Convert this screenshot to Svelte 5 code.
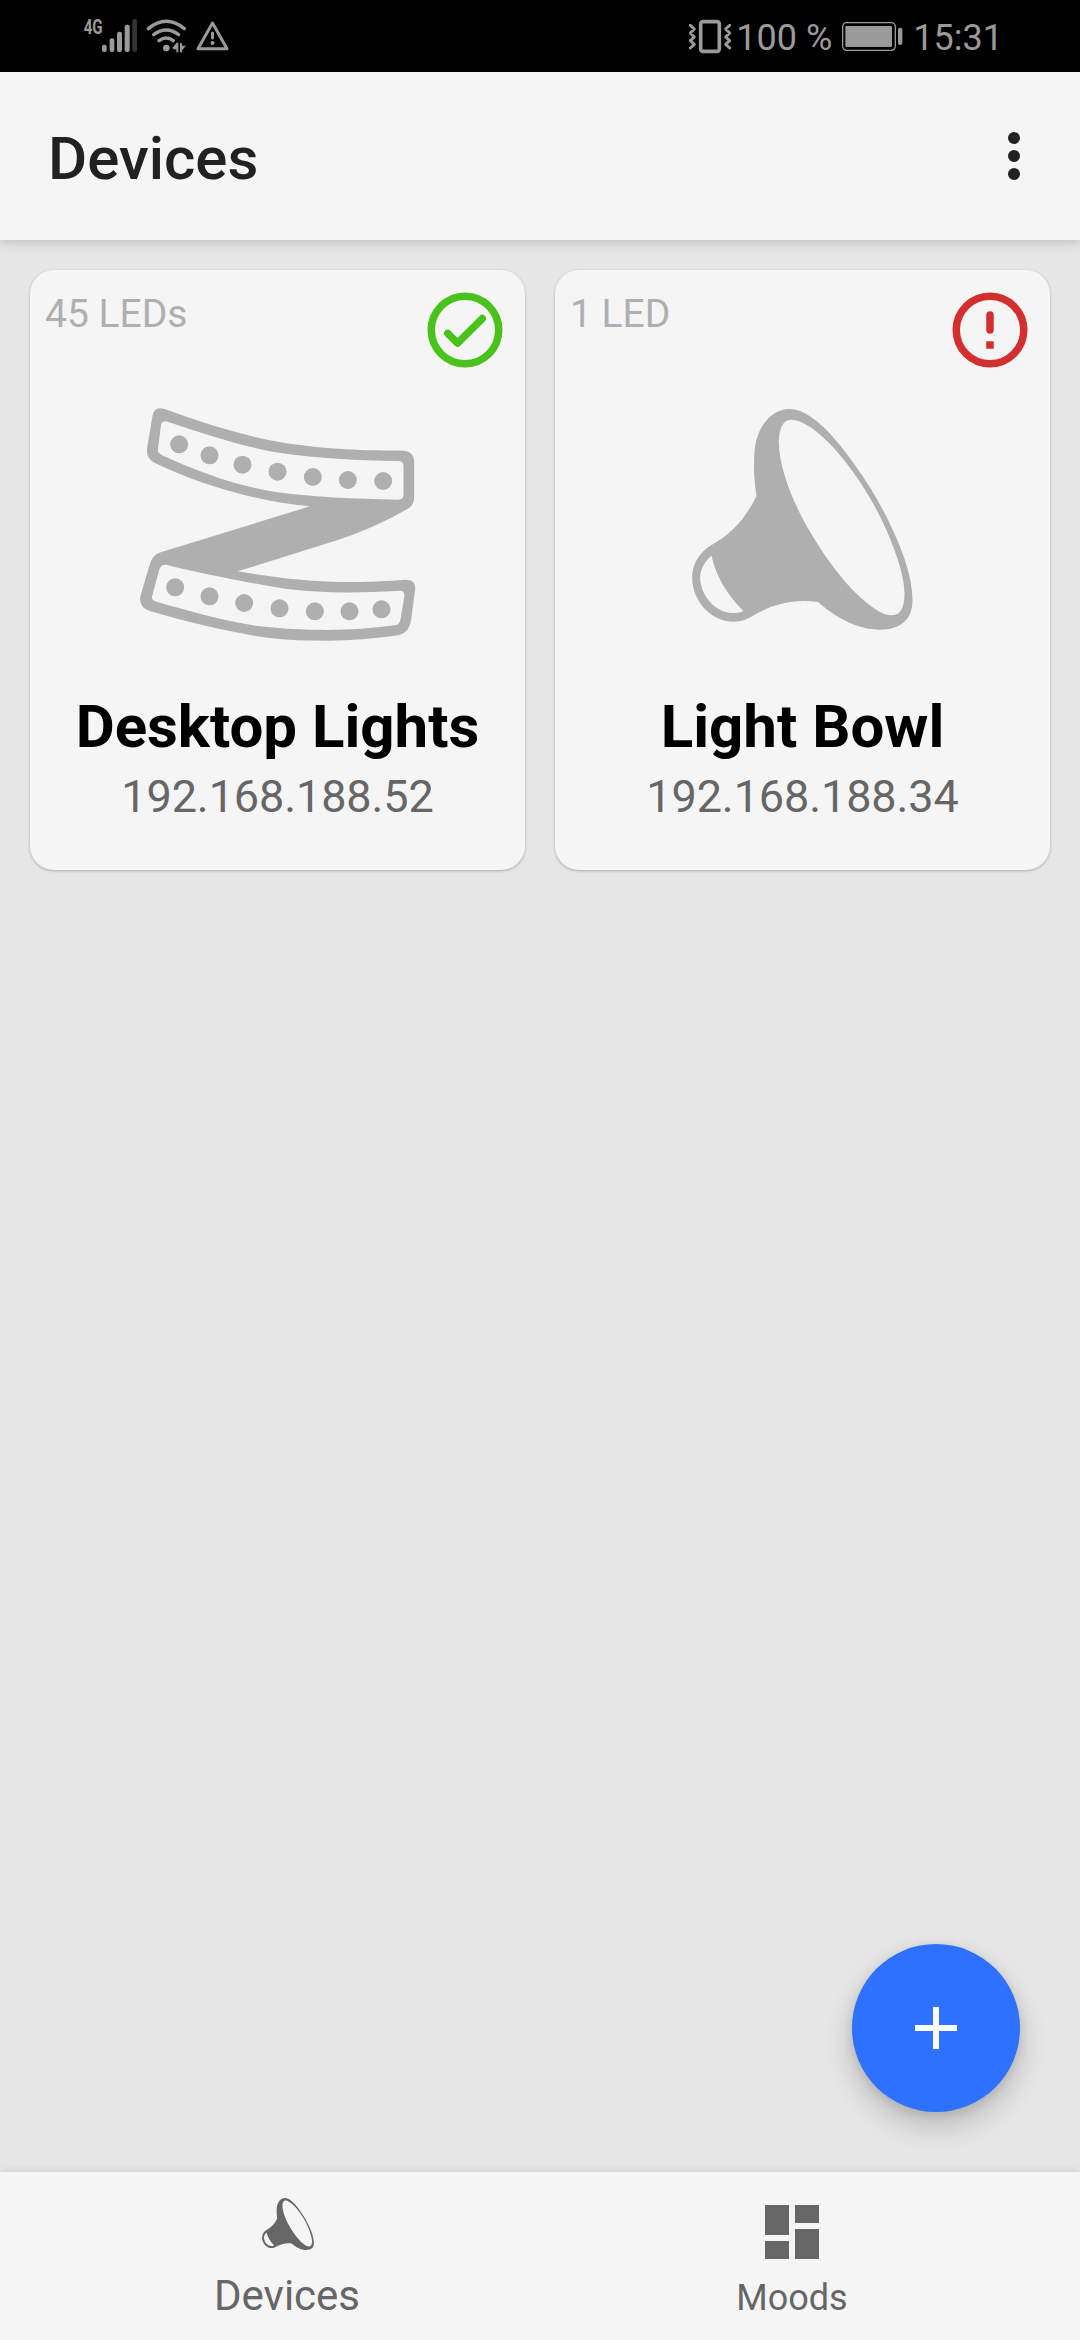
<script>
  const devices = [
    { leds: '45 LEDs', name: 'Desktop Lights', ip: '192.168.188.52', icon: 'strip', online: true },
    { leds: '1 LED', name: 'Light Bowl', ip: '192.168.188.34', icon: 'bowl', online: false }
  ];

  const upperDots = [[176, 193], [267, 226], [366, 254], [471, 275], [577, 291], [682, 300], [788, 303]];
  const lowerDots = [[164, 622], [267, 649], [371, 669], [477, 685], [583, 694], [687, 694], [783, 688]];
</script>

{#snippet bowl()}
  <path
    fill-rule="evenodd"
    d="M258 348C249 290 249 250 253 205C262 135 305 87 357 87C440 87 540 230 602 328C660 425 726 560 726 660C726 720 690 749 628 749C560 749 495 712 442 666C365 655 300 676 250 706C225 721 210 725 189 725C120 725 65 660 65 593C65 550 90 515 122 496C185 460 225 415 258 348Z
    M363 119C335 119 325 150 325 190C327 270 370 380 435 482C510 605 610 706 664 706C692 706 702 680 702 640C702 570 650 440 595 348C520 220 420 119 363 119Z
    M123 527C135 585 170 645 219 693C205 699 195 699 185 699C130 697 89 640 89 593C89 570 101 545 123 527Z"
  />
{/snippet}

<div class="screen">
  <div class="status">
    <svg class="status-left" viewBox="0 0 600 216">
      <text x="71" y="102" font-size="62" font-weight="700" textLength="57" lengthAdjust="spacingAndGlyphs">4G</text>
      <rect x="126" y="134" width="14" height="22" rx="6" />
      <rect x="149" y="115" width="14" height="41" rx="6" />
      <rect x="171" y="95" width="15" height="61" rx="6" />
      <rect x="194" y="74" width="15" height="82" rx="6" />
      <rect class="dim" x="217" y="57" width="14" height="99" rx="6" />
      <g class="line" stroke-width="10">
        <path d="M265 86Q319 42 373 86" />
        <path d="M281 104Q319 76 356 104" />
        <path d="M297 122Q319 106 340 122" />
      </g>
      <circle cx="319" cy="144" r="10" />
      <path d="M337 144L350 128H355V157H349V148H341ZM360 130H366V137H378L366 151V157H360Z" />
      <path class="line" stroke-width="9" d="M457.500 69L501 146H414Z" />
      <path class="line" stroke-width="9" d="M457.500 99V114" />
      <circle cx="457.500" cy="129" r="6" />
    </svg>
    <div class="status-right">
      <svg class="vibrate" viewBox="54 0 135 216">
        <rect class="line" stroke-width="11" x="92" y="65" width="56" height="89" rx="7" />
        <path class="line" stroke-width="9" d="M61 76L73 87L61 99L73 111L61 122L73 133L61 144M179 76L167 87L179 99L167 111L179 122L167 133L179 144" />
      </svg>
      <span class="percent">100 %</span>
      <svg class="battery" viewBox="516 0 183 216">
        <rect class="line" stroke-width="4" x="518" y="68" width="158" height="83" rx="12" />
        <rect x="526" y="78" width="140" height="63" rx="4" />
        <rect x="684" y="83" width="13" height="52" rx="6" />
      </svg>
      <span class="time">15:31</span>
    </div>
  </div>

  <header>
    <h1>Devices</h1>
    <svg class="more" viewBox="0 0 24 24">
      <circle cx="12" cy="6" r="2" /><circle cx="12" cy="12" r="2" /><circle cx="12" cy="18" r="2" />
    </svg>
  </header>

  <main>
    {#each devices as d}
      <article>
        <div class="top">
          <span class="leds">{d.leds}</span>
          <svg class="state" class:ok={d.online} viewBox="0 0 24 24">
            <circle cx="12" cy="12" r="9" />
            {#if d.online}
              <path stroke-linecap="round" stroke-linejoin="round" d="M7.400 12.900L10 15.500L16.600 8.950" />
            {:else}
              <path stroke-linecap="round" d="M12 8V12" />
              <path d="M12 15V17" />
            {/if}
          </svg>
        </div>
        {#if d.icon === 'strip'}
          <svg class="art" viewBox="-7.500 0 960 840">
            <path
              fill-rule="evenodd"
              d="M134 88C250 130 360 165 480 187C600 206 700 212 848 212Q881 214 881 247V350Q881 376 862 386Q760 445 640 484L352 574C450 590 560 605 670 606C740 606 800 603 855 599Q887 599 884 628L872 718Q868 757 835 766C760 776 690 782 620 782C560 782 500 780 440 773C320 756 210 728 90 694Q53 682 60 648L88 552Q96 526 116 518L568 379C400 364 230 310 105 250Q75 236 80 203L96 108Q101 76 134 88Z
              M144 126C250 162 366 200 480 219C600 236 700 241 833 243Q849 243 849 258V345Q849 359 833 359C700 357 580 351 470 337C350 318 230 274 128 227Q111 220 112 210L121 138Q124 119 144 126Z
              M140 555C240 580 370 606 500 627C600 639 700 640 838 632Q852 632 852 646L840 718Q837 735 825 736C750 745 690 750 620 750C550 750 480 746 420 739C310 724 210 693 108 665Q92 660 95 648L116 570Q121 552 140 555Z"
            />
            {#each [...upperDots, ...lowerDots] as [x, y]}
              <circle cx={x} cy={y} r="27" />
            {/each}
          </svg>
        {:else}
          <svg class="art" viewBox="-82.500 0 960 840">{@render bowl()}</svg>
        {/if}
        <h2>{d.name}</h2>
        <p>{d.ip}</p>
      </article>
    {/each}
    <button class="fab" aria-label="Add device">
      <svg viewBox="0 0 24 24"><path d="M19 13H13V19H11V13H5V11H11V5H13V11H19Z" /></svg>
    </button>
  </main>

  <nav>
    <div class="tab active">
      <svg class="nav-bowl" viewBox="64 87 663 663">{@render bowl()}</svg>
      <span>Devices</span>
    </div>
    <div class="tab">
      <svg class="nav-grid" viewBox="3 3 18 18"><path d="M3 13H11V3H3ZM3 21H11V15H3ZM13 21H21V11H13ZM13 3V9H21V3Z" /></svg>
      <span>Moods</span>
    </div>
  </nav>
</div>

<style>
  :global(body) {
    margin: 0;
    background: #e6e6e6;
  }
  .screen {
    width: 1080px;
    height: 2340px;
    display: flex;
    flex-direction: column;
    overflow: hidden;
    background: #e6e6e6;
    font-family: Roboto, "Liberation Sans", sans-serif;
  }
  svg {
    display: block;
    flex: none;
  }
  h1, h2, p {
    margin: 0;
  }
  .status {
    height: 72px;
    flex: none;
    background: #000;
    color: #9a9a9a;
    fill: #9a9a9a;
    display: flex;
    justify-content: space-between;
    padding: 0 77px 0 60px;
  }
  .status-left {
    width: 200px;
    height: 72px;
  }
  .dim {
    fill: #333;
  }
  .line {
    fill: none;
    stroke: #9a9a9a;
    stroke-linecap: round;
    stroke-linejoin: round;
  }
  .status-right {
    display: flex;
    font-size: 36px;
    line-height: 76px;
    white-space: nowrap;
  }
  .vibrate {
    width: 45px;
    height: 72px;
  }
  .percent {
    margin-left: 3px;
  }
  .battery {
    width: 61px;
    height: 72px;
    margin: 0 10px;
  }
  header {
    position: relative;
    z-index: 2;
    height: 168px;
    flex: none;
    box-sizing: border-box;
    padding: 0 30px 0 48px;
    display: flex;
    align-items: center;
    justify-content: space-between;
    background: #f5f5f5;
    box-shadow: 0 2px 12px rgba(0, 0, 0, 0.18);
  }
  h1 {
    padding-top: 5px;
    font-size: 60px;
    line-height: 70px;
    font-weight: 500;
    color: #212121;
  }
  .more {
    width: 72px;
    height: 72px;
    fill: #212121;
  }
  main {
    position: relative;
    flex: 1;
    display: grid;
    grid-template-columns: 1fr 1fr;
    align-items: start;
    gap: 30px;
    padding: 30px;
  }
  article {
    height: 600px;
    border-radius: 24px;
    background: #f5f5f5;
    box-shadow: 0 1px 3px rgba(0, 0, 0, 0.26);
    display: flex;
    flex-direction: column;
    align-items: center;
  }
  .top {
    align-self: stretch;
    height: 110px;
    box-sizing: border-box;
    padding: 15px 15px 0;
    display: flex;
    justify-content: space-between;
    align-items: flex-start;
  }
  .leds {
    padding-top: 6px;
    font-size: 39px;
    line-height: 46px;
    color: #afafaf;
  }
  .state {
    width: 90px;
    height: 90px;
    fill: none;
    stroke: #d32f2f;
    stroke-width: 2;
  }
  .state.ok {
    stroke: #49c31b;
  }
  .art {
    width: 320px;
    height: 280px;
    fill: #afafaf;
  }
  h2 {
    margin-top: 31px;
    font-size: 60px;
    line-height: 71px;
    font-weight: 700;
    color: #000;
  }
  p {
    margin-top: 8px;
    font-size: 45px;
    line-height: 53px;
    letter-spacing: -0.1px;
    color: #666;
  }
  .fab {
    position: absolute;
    right: 60px;
    bottom: 60px;
    width: 168px;
    height: 168px;
    border: 0;
    border-radius: 50%;
    padding: 48px;
    background: #2e71ff;
    box-shadow: 0 14px 28px rgba(0, 0, 0, 0.2), 0 2px 10px rgba(0, 0, 0, 0.1);
  }
  .fab svg {
    width: 72px;
    height: 72px;
    fill: #fff;
  }
  nav {
    position: relative;
    height: 168px;
    flex: none;
    display: flex;
    justify-content: center;
    background: #f5f5f5;
    box-shadow: 0 0 8px rgba(0, 0, 0, 0.13);
  }
  .tab {
    width: 504px;
    display: flex;
    flex-direction: column;
    align-items: center;
    color: #666;
    fill: #666;
    font-size: 36px;
    line-height: 42px;
  }
  .nav-bowl {
    width: 52px;
    height: 52px;
    margin: 26px 0 21px;
  }
  .active {
    font-size: 42px;
    line-height: 50px;
  }
  .active span {
    margin-right: 2px;
  }
  .nav-grid {
    width: 54px;
    height: 54px;
    margin: 33px 0 18px;
  }
</style>
